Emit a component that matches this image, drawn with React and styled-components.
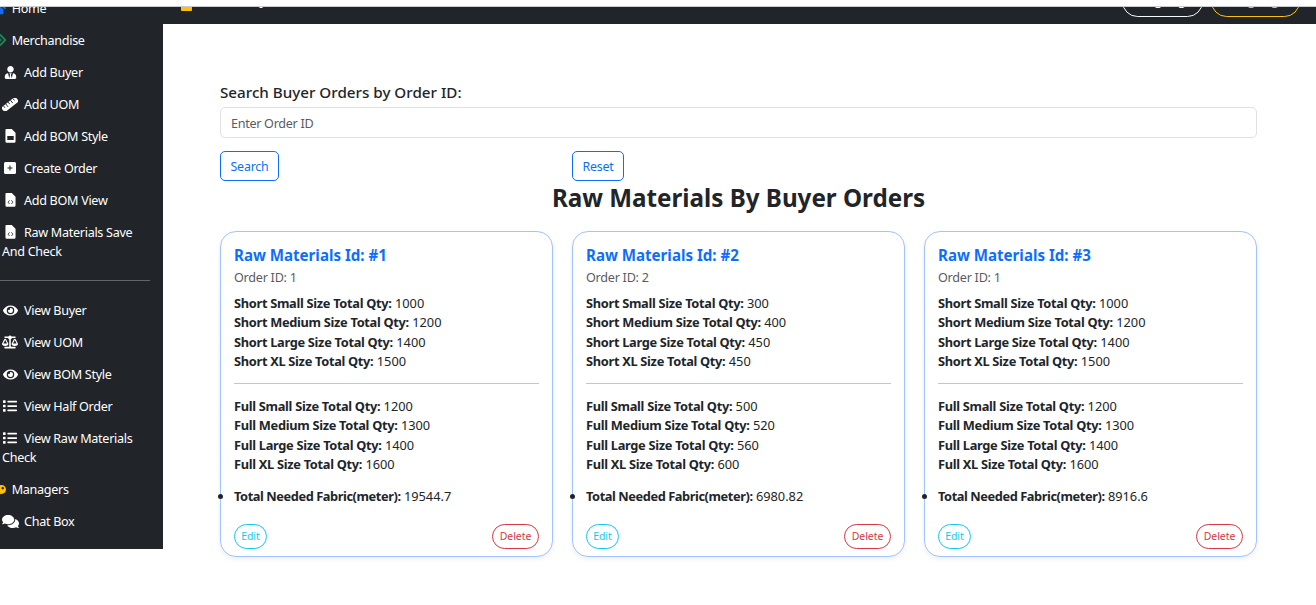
import styled, { createGlobalStyle } from "styled-components"
import { FaUserTie, FaEye, FaBalanceScale, FaList, FaComments, FaHome, FaKey, FaBox } from "react-icons/fa"

const GlobalStyle = createGlobalStyle`
html, body {
    margin: 0;
    padding: 0;
    background: #fff;
}
body {
    font-family: "Noto Sans", "Open Sans", sans-serif;
    color: #212529;
}
* { box-sizing: border-box; }
`

const Page = styled.div`
width: 1316px;
height: 605px;
overflow: hidden;
display: flex;
flex-direction: column;
`

const TopStrip = styled.div`
height: 7px;
flex: none;
background: #fff;
border-bottom: 1px solid #c9cbcd;
`

const Shell = styled.div`
display: flex;
align-items: flex-start;
flex: 1;
min-height: 0;
`

const Sidebar = styled.aside`
width: 163px;
height: 542px;
flex: none;
overflow: hidden;
background: #212529;
display: flex;
flex-direction: column;
justify-content: flex-end;
padding-bottom: 12px;
`

const MenuItem = styled.div`
flex: none;
color: #fff;
font-size: 12.6px;
letter-spacing: -0.3px;
line-height: 19px;
padding: 6.5px 8px 6.5px ${(p) => (p.$top ? "0" : "2px")};
`

const MenuIcon = styled.span`
display: inline-flex;
align-items: center;
justify-content: ${(p) => (p.$top ? "flex-end" : "center")};
width: 16px;
height: 19px;
padding-top: ${(p) => p.$drop || 0}px;
vertical-align: top;
margin-left: ${(p) => (p.$top ? "-10.5px" : "0")};
margin-right: ${(p) => (p.$top ? "6.2px" : "6px")};
color: ${(p) => p.$color || "#fff"};
svg { display: block; flex: none; width: ${(p) => p.$w || 12}px; height: auto; }
`

const MenuDivider = styled.hr`
flex: none;
width: 150px;
height: 1px;
margin: 13px 0 13px;
border: 0;
background: #62666a;
`

const Main = styled.main`
flex: 1;
min-width: 0;
display: flex;
flex-direction: column;
`

const Navbar = styled.header`
height: 17px;
flex: none;
overflow: hidden;
background: #212529;
display: flex;
align-items: flex-end;
justify-content: space-between;
padding: 0 16px 7px 18px;
`

const Brand = styled.div`
display: flex;
align-items: flex-end;
gap: 6px;
color: #fff;
font-size: 14px;
font-weight: 700;
line-height: 26px;
margin-bottom: 4px;
svg { color: #ffc107; width: 11px; height: auto; margin-bottom: 2px; }
`

const NavButtons = styled.div`
display: flex;
gap: 8px;
`

const NavButton = styled.button`
width: ${(p) => p.$width}px;
height: 31px;
flex: none;
border: 1px solid ${(p) => p.$color};
border-radius: 16px;
background: transparent;
color: ${(p) => p.$color};
font: 500 13px/19px "Noto Sans", sans-serif;
padding: 0 0 3px;
`

const Content = styled.div`
padding: 59px 59px 0 57px;
`

const SearchLabel = styled.label`
display: block;
font-size: 15.2px;
font-weight: 500;
line-height: 19px;
margin-bottom: 5px;
`

const SearchInput = styled.input`
display: block;
width: 100%;
height: 31px;
border: 1px solid #dee2e6;
border-radius: 5px;
padding: 2px 10px 0;
font: 12.6px "Noto Sans", sans-serif;
letter-spacing: -0.3px;
color: #212529;
&::placeholder { color: #595c5f; opacity: 1; }
`

const Columns = styled.div`
display: grid;
grid-template-columns: repeat(3, 333px);
column-gap: 19px;
`

const ButtonRow = styled(Columns)`
margin-top: 13px;
`

const OutlineButton = styled.button`
justify-self: start;
height: 30px;
width: ${(p) => p.$width}px;
padding: 0;
border: 1px solid #0d6efd;
border-radius: 5px;
background: #fff;
color: #0d6efd;
font: 12.4px "Noto Sans", sans-serif;
letter-spacing: -0.2px;
`

const Heading = styled.h2`
margin: 0;
height: 50px;
font-size: 24.2px;
font-weight: 700;
line-height: 34px;
text-align: center;
`

const Card = styled.section`
height: 326px;
border: 1px solid #9ec5fe;
border-radius: 16px;
padding: 12px 13px 7px;
box-shadow: 0 2px 5px rgba(0, 0, 0, 0.07);
background: #fff;
display: flex;
flex-direction: column;
`

const CardTitle = styled.h5`
margin: 0;
color: #0d6efd;
font-size: 15.1px;
font-weight: 700;
line-height: 22px;
`

const OrderId = styled.div`
color: #595c5f;
font-size: 12.6px;
letter-spacing: -0.25px;
line-height: 18px;
margin: 3px 0 7px;
`

const QtyRow = styled.div`
font-size: 12.8px;
line-height: 19.25px;
b { font-weight: 700; letter-spacing: -0.3px; }
`

const CardRule = styled.hr`
width: 100%;
height: 1px;
border: 0;
margin: 12px 0 13px;
background: #c6c7c8;
`

const FabricList = styled.ul`
list-style: disc;
margin: 13px 0 0;
padding: 0;
`

const FabricItem = styled.li`
font-size: 12.8px;
line-height: 19.25px;
b { font-weight: 700; letter-spacing: -0.42px; }
`

const CardActions = styled.div`
margin-top: auto;
display: flex;
justify-content: space-between;
`

const PillButton = styled.button`
height: 25px;
width: ${(p) => p.$width}px;
padding: 0 0 2px;
border: 1px solid ${(p) => p.$color};
border-radius: 13px;
background: #fff;
color: ${(p) => p.$color};
font: 10.4px "Noto Sans", sans-serif;
`

const DiamondIcon = () => (
    <svg viewBox="0 0 12 12">
        <path d="M6 .6 11.4 6 6 11.4.6 6z" fill="none" stroke="currentColor" strokeWidth="1.9" />
        <path d="M6 4.2 7.8 6 6 7.8 4.2 6z" fill="currentColor" />
    </svg>
)

const RulerIcon = () => (
    <svg viewBox="0 0 16 13">
        <g transform="rotate(-38 8 6.500)">
            <rect x="-1" y="3.500" width="18" height="6" rx="0.800" fill="currentColor" />
            <path d="M2 3.500V6M5 3.500V7M8 3.500V6M11 3.500V7M14 3.500V6" stroke="#212529" strokeWidth="0.900" />
        </g>
    </svg>
)

const FileBandIcon = () => (
    <svg viewBox="0 0 12 15">
        <path fillRule="evenodd" d="M1.400 0H7.400L11.500 4V13.600A1.400 1.400 0 0 1 10.100 15H1.900A1.400 1.400 0 0 1 .5 13.600V1A1 1 0 0 1 1.400 0ZM2.500 7.500V12H9.500V7.500Z" fill="currentColor" />
    </svg>
)

const FileCodeIcon = () => (
    <svg viewBox="0 0 12 15">
        <path d="M1.400 0H7.400L11.500 4V13.600A1.400 1.400 0 0 1 10.100 15H1.900A1.400 1.400 0 0 1 .5 13.600V1A1 1 0 0 1 1.400 0Z" fill="currentColor" />
        <path d="M5 8 3.400 10 5 12M7 8 8.600 10 7 12" fill="none" stroke="#212529" strokeWidth="0.900" />
    </svg>
)

const PlusBoxIcon = () => (
    <svg viewBox="0 0 12 12">
        <path fillRule="evenodd" d="M1.500 0H10.500A1.500 1.500 0 0 1 12 1.500V10.500A1.500 1.500 0 0 1 10.500 12H1.500A1.500 1.500 0 0 1 0 10.500V1.500A1.500 1.500 0 0 1 1.500 0ZM5.500 3.500V5.500H3.500V6.500H5.500V8.500H6.500V6.500H8.500V5.500H6.500V3.500Z" fill="currentColor" />
    </svg>
)

const addItems = [
    ["Add Buyer", <FaUserTie />, 13],
    ["Add UOM", <RulerIcon />, 16],
    ["Add BOM Style", <FileBandIcon />, 11],
    ["Create Order", <PlusBoxIcon />, 12],
    ["Add BOM View", <FileCodeIcon />, 11],
    ["Raw Materials Save And Check", <FileCodeIcon />, 11],
]

const viewItems = [
    ["View Buyer", <FaEye />, 15],
    ["View UOM", <FaBalanceScale />, 16],
    ["View BOM Style", <FaEye />, 15],
    ["View Half Order", <FaList />, 14],
    ["View Raw Materials Check", <FaList />, 14],
]

const orders = [
    { id: 1, orderId: 1, short: [1000, 1200, 1400, 1500], full: [1200, 1300, 1400, 1600], fabric: "19544.7" },
    { id: 2, orderId: 2, short: [300, 400, 450, 450], full: [500, 520, 560, 600], fabric: "6980.82" },
    { id: 3, orderId: 1, short: [1000, 1200, 1400, 1500], full: [1200, 1300, 1400, 1600], fabric: "8916.6" },
]

const sizes = ["Small", "Medium", "Large", "XL"]

function OrderCard({ order }) {
    return (
        <Card>
            <CardTitle>Raw Materials Id: #{order.id}</CardTitle>
            <OrderId>Order ID: {order.orderId}</OrderId>
            {order.short.map((qty, i) => (
                <QtyRow key={sizes[i]}><b>Short {sizes[i]} Size Total Qty:</b> {qty}</QtyRow>
            ))}
            <CardRule />
            {order.full.map((qty, i) => (
                <QtyRow key={sizes[i]}><b>Full {sizes[i]} Size Total Qty:</b> {qty}</QtyRow>
            ))}
            <FabricList>
                <FabricItem><b>Total Needed Fabric(meter):</b> {order.fabric}</FabricItem>
            </FabricList>
            <CardActions>
                <PillButton $width={33} $color="#0dcaf0">Edit</PillButton>
                <PillButton $width={47} $color="#dc3545">Delete</PillButton>
            </CardActions>
        </Card>
    )
}

export default function App() {
    return (
        <>
            <GlobalStyle />
            <Page>
                <TopStrip />
                <Shell>
                    <Sidebar>
                        <MenuItem $top><MenuIcon $top $w={16} $color="#0d6efd"><FaHome /></MenuIcon>Home</MenuItem>
                        <MenuItem $top><MenuIcon $top $w={12} $color="#198754"><DiamondIcon /></MenuIcon>Merchandise</MenuItem>
                        {addItems.map(([label, icon, w]) => (
                            <MenuItem key={label}><MenuIcon $w={w}>{icon}</MenuIcon>{label}</MenuItem>
                        ))}
                        <MenuDivider />
                        {viewItems.map(([label, icon, w]) => (
                            <MenuItem key={label}><MenuIcon $w={w}>{icon}</MenuIcon>{label}</MenuItem>
                        ))}
                        <MenuItem $top><MenuIcon $top $w={13} $drop={4} $color="#ffc107"><FaKey /></MenuIcon>Managers</MenuItem>
                        <MenuItem><MenuIcon $w={17}><FaComments /></MenuIcon>Chat Box</MenuItem>
                    </Sidebar>
                    <Main>
                        <Navbar>
                            <Brand><FaBox />Inventory</Brand>
                            <NavButtons>
                                <NavButton $width={81} $color="#f8f9fa">Language</NavButton>
                                <NavButton $width={89} $color="#ffc107">Language</NavButton>
                            </NavButtons>
                        </Navbar>
                        <Content>
                            <SearchLabel>Search Buyer Orders by Order ID:</SearchLabel>
                            <SearchInput placeholder="Enter Order ID" />
                            <ButtonRow>
                                <OutlineButton $width={59}>Search</OutlineButton>
                                <OutlineButton $width={52}>Reset</OutlineButton>
                            </ButtonRow>
                            <Heading>Raw Materials By Buyer Orders</Heading>
                            <Columns>
                                {orders.map((order) => <OrderCard key={order.id} order={order} />)}
                            </Columns>
                        </Content>
                    </Main>
                </Shell>
            </Page>
        </>
    )
}
